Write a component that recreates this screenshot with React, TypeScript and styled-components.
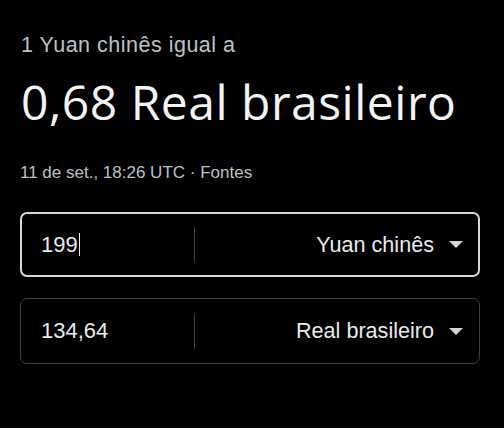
import React from "react";
import styled, { createGlobalStyle } from "styled-components";

const Global = createGlobalStyle`
  html, body { margin: 0; padding: 0; background: #000; }
  body { font-family: "Liberation Sans", Arial, sans-serif; }
`;

const Page = styled.div`
  width: 504px;
  height: 428px;
  box-sizing: border-box;
  padding: 33px 24px 0 20px;
  background: #000;
`;

const Lead = styled.div`
  font-size: 21.5px;
  line-height: 24px;
  letter-spacing: 0.5px;
  color: #bdc1c6;
  padding-left: 1px;
`;

const Rate = styled.div`
  margin-top: 17px;
  font-family: "Open Sans", sans-serif;
  font-size: 48px;
  line-height: 56px;
  letter-spacing: 0.5px;
  color: #f1f3f4;
  padding-left: 1px;
`;

const Meta = styled.div`
  margin-top: 33px;
  font-size: 17px;
  line-height: 20px;
  color: #bdc1c6;
`;

const Fields = styled.div`
  margin-top: 29px;
  display: flex;
  flex-direction: column;
  gap: 21px;
`;

const Field = styled.div<{ $active?: boolean }>`
  height: ${(p) => (p.$active ? "65px" : "66px")};
  box-sizing: border-box;
  display: flex;
  align-items: center;
  border-radius: 7px;
  border: ${(p) => (p.$active ? "2px solid #d6d6d6" : "1px solid #3c4043")};
  padding: 0 ${(p) => (p.$active ? "15px" : "16px")} 0 ${(p) => (p.$active ? "19px" : "20px")};
`;

const Amount = styled.div`
  width: 153px;
  display: flex;
  align-items: center;
  font-size: 22px;
  color: #e8eaed;
`;

const Caret = styled.span`
  display: inline-block;
  width: 1px;
  height: 23px;
  background: #e8eaed;
  margin-left: 1px;
`;

const Divider = styled.div`
  width: 1px;
  height: 35px;
  background: #3c4043;
`;

const Currency = styled.div`
  flex: 1;
  display: flex;
  justify-content: flex-end;
  align-items: center;
  gap: 15px;
  font-size: 21.6px;
  color: #e8eaed;
`;

const Arrow = () => (
  <svg width="14" height="7" viewBox="0 0 14 7">
    <path d="M0 0 L14 0 L7 7 Z" fill="#d6d6d6" />
  </svg>
);

export default function App() {
  return (
    <>
      <Global />
      <Page>
        <Lead>1 Yuan chinês igual a</Lead>
        <Rate>0,68 Real brasileiro</Rate>
        <Meta>11 de set., 18:26 UTC · Fontes</Meta>
        <Fields>
          <Field $active>
            <Amount>
              199
              <Caret />
            </Amount>
            <Divider />
            <Currency>
              Yuan chinês
              <Arrow />
            </Currency>
          </Field>
          <Field>
            <Amount>134,64</Amount>
            <Divider />
            <Currency>
              Real brasileiro
              <Arrow />
            </Currency>
          </Field>
        </Fields>
      </Page>
    </>
  );
}
